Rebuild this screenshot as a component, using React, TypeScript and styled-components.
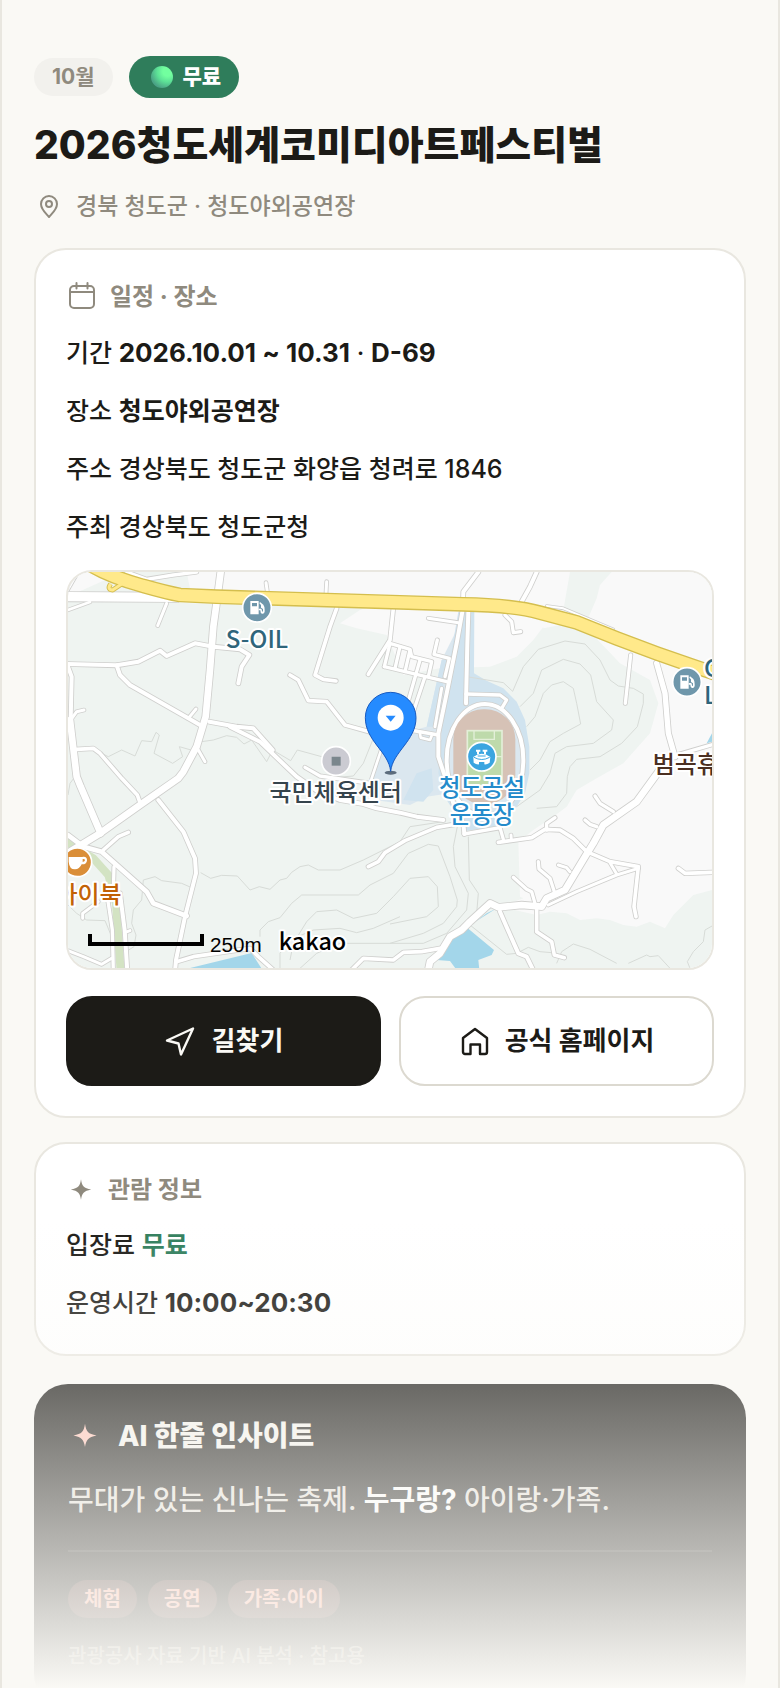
import React from "react";
import styled, { createGlobalStyle } from "styled-components";

const GlobalStyle = createGlobalStyle`
  *, *::before, *::after { box-sizing: border-box; }
  body {
    margin: 0;
    background: #faf9f5;
    color: #1c1b17;
    font-family: Inter, "Noto Sans CJK KR", sans-serif;
  }
  h1, h2, p, ul { margin: 0; padding: 0; }
`;

const Page = styled.main`
  position: relative;
  height: 100vh;
  overflow: hidden;
  padding: 56px 32px 0;
  border: solid #e9e7e0;
  border-width: 0 2px;
`;

const Badges = styled.div`
  display: flex;
  align-items: center;
  gap: 16px;
`;

const MonthBadge = styled.span`
  padding: 0 18px;
  border-radius: 20px;
  background: #f2f1ed;
  color: #8f8a7e;
  font-size: 21px;
  font-weight: 700;
  line-height: 38px;
`;

const FreeBadge = styled.span`
  display: flex;
  align-items: center;
  gap: 10px;
  padding: 0 18px 0 22px;
  border-radius: 21px;
  background: #2f7d5b;
  color: #fff;
  font-size: 21px;
  font-weight: 800;
  line-height: 42px;
`;

const Dot = styled.i`
  width: 22px;
  height: 22px;
  border-radius: 50%;
  background: radial-gradient(circle at 75% 25%, #72ff9f 0 20%, #5ce096 45%, #4ba385 75%, #5199a0 100%);
`;

const Title = styled.h1`
  margin-top: 22px;
  font-size: 39px;
  font-weight: 800;
  line-height: 50px;
`;

const Place = styled.p`
  display: flex;
  align-items: center;
  gap: 14px;
  margin: 20px 0 26px;
  padding-left: 2px;
  color: #8f8a7e;
  font-size: 23px;
  font-weight: 500;
  line-height: 32px;
`;

const Card = styled.section`
  margin-bottom: 24px;
  padding: 30px;
  border: 2px solid #e9e7e0;
  border-radius: 32px;
  background: #fff;
`;

const CardTitle = styled.h2`
  display: flex;
  align-items: center;
  gap: 12px;
  min-height: 32px;
  margin-bottom: 18px;
  color: #8f8a7e;
  font-size: 24px;
  font-weight: 700;
  line-height: 32px;
`;

const Facts = styled.div`
  display: grid;
  gap: 16px;
`;

const Fact = styled.p`
  font-size: 25px;
  font-weight: 500;
  line-height: 42px;
`;

const Figures = styled.strong`
  font-size: 26px;
  font-weight: 700;
`;

const Free = styled.strong`
  color: #2f7d5b;
`;

const MapFrame = styled.div`
  height: 400px;
  margin: 22px 0 26px;
  overflow: hidden;
  border: 2px solid #e9e7e0;
  border-radius: 26px;

  svg { display: block; width: 100%; height: 100%; }
`;

const MapLabel = styled.text<{ $size?: number }>`
  font-family: "Noto Sans CJK KR", sans-serif;
  font-size: ${(p) => p.$size ?? 72}px;
  font-weight: 500;
  stroke: #fff;
  stroke-width: 12px;
  stroke-linejoin: round;
  paint-order: stroke;
`;

const ScaleLabel = styled.text`
  font-family: "Liberation Sans", sans-serif;
  font-size: 62px;
`;

const Actions = styled.div`
  display: grid;
  grid-template-columns: 1fr 1fr;
  gap: 18px;
`;

const Action = styled.a<{ $solid?: boolean }>`
  display: flex;
  align-items: center;
  justify-content: center;
  gap: 14px;
  height: 90px;
  border: 2px solid ${(p) => (p.$solid ? "#1c1b17" : "#dcd9d0")};
  border-radius: 26px;
  background: ${(p) => (p.$solid ? "#1c1b17" : "#fff")};
  color: ${(p) => (p.$solid ? "#faf9f5" : "#1c1b17")};
  font-size: 26px;
  font-weight: 700;
  line-height: 32px;
  text-decoration: none;
`;

const Insight = styled.section`
  margin-top: 28px;
  padding: 34px;
  border-radius: 34px;
  background: #1c1b17;
`;

const InsightTitle = styled.h2`
  display: flex;
  align-items: center;
  gap: 16px;
  color: #f4f2ec;
  font-size: 28px;
  font-weight: 800;
  line-height: 36px;
`;

const InsightText = styled.p`
  margin-top: 24px;
  padding-bottom: 28px;
  border-bottom: 2px solid #34332f;
  color: #e2dfd7;
  font-size: 28px;
  font-weight: 500;
  line-height: 44px;

  strong { color: #fff; }
`;

const Tags = styled.ul`
  display: flex;
  gap: 11px;
  margin: 28px 0 20px;
  list-style: none;
`;

const Tag = styled.li`
  padding: 0 16px;
  border-radius: 19px;
  background: #4c3430;
  color: #ffab98;
  font-size: 20px;
  font-weight: 700;
  line-height: 38px;
`;

const Source = styled.p`
  color: #8f8a7e;
  font-size: 20px;
  font-weight: 500;
  line-height: 36px;
`;

const Fade = styled.div`
  position: absolute;
  inset: auto -2px 0;
  height: 468px;
  background: linear-gradient(rgba(250, 249, 245, 0), #faf9f5);
  pointer-events: none;
`;

const PinIcon = () => (
  <svg width="26" height="26" viewBox="0 0 26 26" fill="none" stroke="currentColor" strokeWidth="2">
    <path d="M13 24C10 20.500 5 16.500 5 11a8 8 0 0 1 16 0c0 5.500-5 9.500-8 13Z" strokeLinejoin="round" />
    <circle cx="13" cy="11" r="3" />
  </svg>
);

const CalendarIcon = () => (
  <svg width="32" height="34" viewBox="0 0 32 34" fill="none" stroke="currentColor" strokeWidth="2" strokeLinecap="round">
    <rect x="4" y="6" width="24" height="22" rx="4" />
    <path d="M4 12H28M10.500 3V8.500M21.500 3V8.500" />
  </svg>
);

const Sparkle = ({ size, color }: { size: number; color: string }) => (
  <svg width={size} height={size} viewBox="0 0 28 28" fill={color}>
    <path d="M14 4C15 10.500 16.500 12.500 23.500 13.500C16.500 15 15 17 14 23C13 17 11.500 15 4.500 13.500C11.500 12.500 13 10.500 14 4Z" />
  </svg>
);

const NavIcon = () => (
  <svg width="34" height="34" viewBox="0 0 34 34" fill="none" stroke="currentColor" strokeWidth="2.4" strokeLinejoin="round">
    <path d="M3 16.500 29 4.500 17 30.500 14.500 19.500Z" />
  </svg>
);

const HomeIcon = () => (
  <svg width="32" height="34" viewBox="0 0 32 34" fill="none" stroke="currentColor" strokeWidth="2.4" strokeLinejoin="round">
    <path d="M4 14 16 5 28 14V28a2 2 0 0 1-2 2H21V20.500H11.500V30H6a2 2 0 0 1-2-2Z" />
  </svg>
);

const roads: [number, string][] = [
  [28, "54,110 380,112"],
  [10, "440,36 370,45 290,58 230,36"],
  [6, "54,90 85,36"],
  [8, "54,150 120,126"],
  [9, "323,197 350,130"],
  [9, "648,68 652,95"],
  [9, "830,65 828,100"],
  [20, "512,36 505,90 490,200 480,330 467,470 440,560 400,635 385,655 270,735 150,820 60,875"],
  [12, "54,312 200,316 265,305 330,272 350,288 435,250 490,260 570,268 598,285 575,320 565,370"],
  [12, "200,316 210,345 240,375 415,475 450,495"],
  [9, "415,475 438,447"],
  [12, "54,320 65,350 62,480"],
  [20, "60,480 80,650 92,680 152,820"],
  [9, "62,480 80,455 102,450"],
  [11, "80,568 130,565 150,580 215,655 262,705 270,728"],
  [12, "478,485 560,500 610,505 668,570"],
  [12, "540,500 630,545 740,650 800,692 870,720 940,732 980,745 1050,758 1100,770 1180,780"],
  [10, "765,622 810,648 960,670"],
  [9, "445,570 465,605"],
  [11, "720,345 745,360 775,422 830,425 885,495 975,520"],
  [11, "860,145 840,200 795,345 820,358 858,363"],
  [11, "1030,145 1020,240 955,343"],
  [10, "1003,320 1020,250 1080,268 1085,290 1145,305 1135,350"],
  [10, "1003,320 1190,365"],
  [10, "1035,325 1050,260"],
  [10, "1065,335 1080,270"],
  [10, "1070,440 1110,300"],
  [10, "1085,470 1125,350"],
  [10, "1162,240 1152,283 1198,295 1185,350"],
  [9, "1135,175 1225,188"],
  [9, "1175,385 1155,500"],
  [10, "1080,510 1165,525"],
  [8, "1110,520 1112,533 1140,540 1145,527"],
  [8, "995,565 970,640 950,700"],
  [12, "1285,36 1240,95 1238,150 1220,250 1190,400 1165,520 1165,590 1185,650 1210,730 1240,790 1243,822"],
  [12, "1255,155 1252,250 1248,430"],
  [10, "1248,402 1350,405 1370,420 1355,445"],
  [12, "1460,36 1440,80 1415,125"],
  [10, "1365,165 1385,185 1390,218 1412,215"],
  [6, "1490,138 1540,145 1690,208"],
  [10, "1742,285 1726,430"],
  [16, "1820,310 1845,400 1855,520 1875,590"],
  [20, "1840,615 1760,725 1660,795 1630,850 1605,890 1545,990 1490,1015 1475,1040 1415,1035 1345,1042 1320,1030 1260,1085 1235,1110 1200,1130 1170,1180 1140,1205 1135,1230"],
  [10, "1830,620 1880,585 1990,553"],
  [10, "1635,708 1650,730 1690,755"],
  [10, "1605,780 1620,793 1640,800"],
  [10, "1515,773 1490,790 1490,810"],
  [11, "1345,847 1445,833 1485,808 1530,810 1570,835 1610,875 1680,905 1765,920 1752,1040 1758,1070"],
  [9, "1495,1035 1580,995 1700,945 1765,925"],
  [9, "1680,908 1700,942"],
  [10, "1242,822 1350,803 1360,838"],
  [9, "1383,825 1384,840"],
  [11, "955,920 985,905 1005,878 1065,842 1160,802 1220,792"],
  [10, "1390,952 1430,988 1445,995 1455,1030"],
  [10, "1465,905 1467,927 1500,955 1513,995"],
  [9, "1525,915 1550,923 1560,935"],
  [11, "1460,1050 1460,1115 1505,1145 1513,1185 1543,1193"],
  [12, "1350,1055 1365,1090 1405,1180 1430,1190 1452,1235"],
  [11, "1885,925 1905,940 1990,937"],
  [11, "900,1235 940,1195 1030,1200 1060,1177 1115,1175 1170,1165"],
  [12, "325,720 400,815 435,895 438,940 405,1070 378,1200 375,1235"],
  [14, "54,825 100,860 155,875 290,995 310,1030 410,1068"],
  [11, "160,870 205,830 235,817"],
  [10, "192,920 190,1000"],
  [10, "172,1010 187,1110 190,1235"],
  [12, "210,1000 224,1110 232,1235"],
  [9, "98,1075 98,1060 145,1025"],
  [9, "226,1117 240,1112"],
  [9, "54,1172 100,1190 155,1213 185,1195"],
  [11, "380,1205 430,1190 600,1165 625,1190 670,1230"],
];

const contours = [
  "150,578 175,590 215,570 255,588 275,542 305,545 318,517 328,525 312,580 368,610 398,590 388,560 430,572",
  "455,545 490,540 530,527 560,532 582,552 605,540 650,605 668,570 722,602 742,570 815,590 880,600",
  "970,535 940,610 910,648 860,652",
  "1250,350 1360,368 1388,394 1420,320 1465,268 1545,243 1605,252 1650,300 1680,360 1705,378 1750,385 1780,402 1780,430 1762,500 1715,550 1650,590 1580,598 1560,620 1552,650 1550,700 1520,740 1460,745",
  "1410,440 1450,400 1475,330 1540,298 1590,312 1622,345 1640,425 1690,480 1685,510 1630,550 1550,560 1515,580 1500,640 1470,690 1400,740",
  "1430,500 1455,470 1480,400 1505,375 1540,365 1570,385 1580,430 1592,492 1540,520 1500,545 1470,600 1440,630",
  "452,938 482,955 515,946 562,948 600,990 628,980 660,988 690,960 710,955 725,937 750,920 775,915 805,930 870,930 940,900 1050,845 1080,800 1180,785",
  "280,960 315,950 335,962 395,970 418,980 438,970",
  "280,960 275,1020 250,1050 245,1090 258,1125 252,1160 228,1175",
  "630,1130 630,1110 655,1085 690,1073 725,1030 755,1005 925,1005 960,975 1030,940 1075,880 1135,853 1165,858 1200,950 1222,1020 1220,1040 1180,1090 1120,1120 1020,1150",
  "720,1200 730,1150 770,1085 800,1055 860,1050 910,1075 980,1060 1030,1010 1080,955 1135,950 1162,980 1165,1040 1130,1070 1020,1092",
  "690,1225 690,1180 720,1140 790,1110 870,1105 920,1118 970,1105 1050,1070",
  "750,1225 800,1180 870,1150 1020,1150 1120,1150 1190,1120 1250,1050 1255,1000 1215,920 1210,860 1222,800",
  "1255,830 1258,960 1285,1000 1280,1060 1260,1095 1370,1183 1400,1180 1435,1162 1470,1175 1505,1178",
  "1520,1210 1535,1175 1570,1152 1620,1168 1700,1210",
  "1735,1210 1790,1185 1800,1190 1825,1187 1860,1225",
  "1920,1225 1912,1205 1930,1175 1960,1145 1965,1110 1986,1098",
  "54,1035 80,1060 110,1080 165,1082 185,1130",
  "54,705 60,670 75,650",
];

const highway = "M110 8C160 40 210 58 270 75S350 98 390 105L500 110 1050 127 1240 133Q1390 136 1470 158L1580 187 1700 235 1820 280 1920 315 2000 342";

const PumpMarker = ({ x, y }: { x: number; y: number }) => (
  <g transform={`translate(${x} ${y})`}>
    <circle r="43" fill="#6f97ab" stroke="#fff" strokeWidth="5" />
    <path d="M-20-20H5V20H-20ZM-15-14V-4H0V-14Z" fill="#fff" fillRule="evenodd" />
    <path d="M9-17 19-9Q23-4 23 6V12Q22 19 15 18 10 17 10 8H5V3H12Q15 4 15 10 16 14 18 11V4L12 0V-8L7-13Z" fill="#fff" />
  </g>
);

const AreaMap = () => (
  <svg viewBox="54 36 1932 1188" preserveAspectRatio="xMidYMid slice" role="img" aria-label="청도야외공연장 지도">
    <path fill="#eff4f1" d="M54 36H1986V1224H54Z" />
    <g fill="#f9f9f9">
      <path d="M54 36H1560L1540 160 1480 200 1450 240 1400 290 1320 320 1170 325 1060 345 1010 225 920 205 870 190 930 150 990 130H425L54 110Z" />
      <path d="M1450 36 1480 205 1560 190 1620 215 1710 310 1800 360 1825 430 1800 520 1720 610 1640 655 1580 690 1550 740 1510 770 1450 810 1405 845 1410 1010 1420 1015 1350 1040 1460 1065 1500 1055 1550 1060 1590 1080 1640 1075 1680 1080 1720 1095 1760 1100 1800 1085 1845 1105 1870 1065 1930 1005 1986 990V36Z" />
    </g>
    <path fill="#eff4f1" d="M1560 36H1685L1650 75 1640 115 1612 180 1540 150ZM80 98 165 60 225 36H410L425 110H80Z" />
    <path fill="#dbe7ef" d="M1215 220 1175 300 1130 500 1060 520 990 560 970 650 990 722 1080 735 1130 710 1200 700 1240 400Z" />
    <path fill="#d0e3ef" d="M1225 155H1273L1272 340 1310 362 1360 385 1400 425 1425 480 1438 560V640L1425 700 1400 740 1340 800 1250 812 1190 720 1165 640 1175 520 1200 300ZM1175 300H1190L1160 500H1130ZM1100 640 1145 625 1150 690 1120 725 1060 720Z" />
    <ellipse cx="1305" cy="600" rx="118" ry="172" fill="#dbe7ef" />
    <g fill="none" stroke="#d7dbd7" strokeWidth="3">
      {contours.map((points) => <polyline key={points} points={points} />)}
    </g>
    <g fill="#a3d6ea">
      <path d="M412 1226 605 1179 615 1195 635 1226ZM1255 1106 1332 1170 1325 1185 1285 1200 1288 1230H1220L1200 1203 1160 1200 1210 1130ZM1275 1086 1340 1045 1310 1060ZM1970 550 1986 520V545Z" />
    </g>
    <polyline points="40,840 130,895 175,945 198,1030 212,1235" fill="none" stroke="#d3e3c3" strokeWidth="24" />
    <g fill="none" strokeLinecap="round" strokeLinejoin="round">
      <g stroke="#cfcfcd">
        {roads.map(([w, points]) => <polyline key={points} points={points} strokeWidth={w + 5} />)}
        <ellipse cx="1305" cy="600" rx="115" ry="168" strokeWidth="17" />
      </g>
      <g stroke="#fff">
        {roads.map(([w, points]) => <polyline key={points} points={points} strokeWidth={w} />)}
        <ellipse cx="1305" cy="600" rx="115" ry="168" strokeWidth="12" />
      </g>
    </g>
    <rect x="1210" y="448" width="186" height="285" rx="90" fill="#d6c2b6" />
    <rect x="1252" y="512" width="104" height="165" fill="#bedaab" stroke="#e3efd8" strokeWidth="5" />
    <path d="M1272 512V538H1333V512M1252 590H1356" fill="none" stroke="#e3efd8" strokeWidth="4" />
    <g fill="none" strokeLinejoin="round">
      <path d="M182 72Q170 88 188 90L215 72" stroke="#d4be4e" strokeWidth="15" />
      <path d={highway} stroke="#d4be4e" strokeWidth="44" />
      <path d="M182 72Q170 88 188 90L215 72" stroke="#ffe98a" strokeWidth="9" />
      <path d={highway} stroke="#ffe98a" strokeWidth="36" />
    </g>
    <PumpMarker x={621} y={143} />
    <MapLabel x="621" y="263" textAnchor="middle" fill="#2f657b">S-OIL</MapLabel>
    <PumpMarker x={1911} y={366} />
    <MapLabel x="1962" y="350" fill="#2f657b">C</MapLabel>
    <MapLabel x="1962" y="431" fill="#2f657b">L</MapLabel>
    <circle cx="858" cy="603" r="43" fill="#cbcbd2" stroke="#fff" strokeWidth="5" />
    <path d="M845 590H872V617H845Z" fill="#7b878d" />
    <MapLabel x="857" y="722" textAnchor="middle" fill="#36444d">국민체육센터</MapLabel>
    <circle cx="1295" cy="590" r="43" fill="#3ba5e0" stroke="#fff" strokeWidth="5" />
    <g fill="#fff">
      <path d="M1270 591Q1295 571 1321 591L1319 608Q1311 614 1303 613V606H1287V613Q1279 614 1271 608Z" />
      <path d="M1278 569H1291V575H1287V583H1281V575H1278ZM1298 569H1312V575H1308V583H1302V575H1298Z" />
    </g>
    <path d="M1272 592Q1295 605 1319 592M1283 588H1307" fill="none" stroke="#3ba5e0" strokeWidth="3" />
    <MapLabel $size={70} x="1296" y="709" textAnchor="middle" fill="#248bcb">청도공설</MapLabel>
    <MapLabel $size={70} x="1296" y="788" textAnchor="middle" fill="#248bcb">운동장</MapLabel>
    <MapLabel x="1808" y="640" fill="#4b3022">범곡휴</MapLabel>
    <circle cx="82" cy="907" r="43" fill="#da8e38" stroke="#fff" strokeWidth="5" />
    <path d="M56 891H96Q112 888 111 902Q109 914 95 913Q88 928 75 928Q58 928 56 905ZM98 897V906Q105 905 105 900Q104 896 98 897Z" fill="#fff" fillRule="evenodd" />
    <MapLabel x="215" y="1030" textAnchor="end" fill="#c26205">아이북</MapLabel>
    <ellipse cx="1022" cy="638" rx="18" ry="6" fill="#5c6c7c" />
    <path d="M1022 634C1016 575 946 543 946 473a76 76 0 0 1 152 0C1098 543 1028 575 1022 634Z" fill="#258bff" stroke="#175ac0" strokeWidth="3" />
    <circle cx="1022" cy="473" r="39" fill="#fff" />
    <path d="M1007 467H1037L1022 485Z" fill="#258bff" />
    <path d="M120 1122V1152H456V1122" fill="none" stroke="#000" strokeWidth="12" />
    <ScaleLabel x="480" y="1176">250m</ScaleLabel>
    <MapLabel $size={70} x="686" y="1170">kakao</MapLabel>
  </svg>
);

export default function App() {
  return (
    <>
      <GlobalStyle />
      <Page>
        <Badges>
          <MonthBadge>10월</MonthBadge>
          <FreeBadge><Dot />무료</FreeBadge>
        </Badges>
        <Title>2026청도세계코미디아트페스티벌</Title>
        <Place><PinIcon />경북 청도군 · 청도야외공연장</Place>

        <Card>
          <CardTitle><CalendarIcon />일정 · 장소</CardTitle>
          <Facts>
            <Fact>기간 <Figures>2026.10.01 ~ 10.31</Figures> · <Figures>D-69</Figures></Fact>
            <Fact>장소 <strong>청도야외공연장</strong></Fact>
            <Fact>주소 경상북도 청도군 화양읍 청려로 1846</Fact>
            <Fact>주최 경상북도 청도군청</Fact>
          </Facts>
          <MapFrame><AreaMap /></MapFrame>
          <Actions>
            <Action $solid href="#directions"><NavIcon />길찾기</Action>
            <Action href="#homepage"><HomeIcon />공식 홈페이지</Action>
          </Actions>
        </Card>

        <Card>
          <CardTitle><Sparkle size={30} color="#8f8a7e" />관람 정보</CardTitle>
          <Facts>
            <Fact>입장료 <Free>무료</Free></Fact>
            <Fact>운영시간 <Figures>10:00~20:30</Figures></Fact>
          </Facts>
        </Card>

        <Insight>
          <InsightTitle><Sparkle size={34} color="#ffc3b5" />AI 한줄 인사이트</InsightTitle>
          <InsightText>무대가 있는 신나는 축제. <strong>누구랑?</strong> 아이랑·가족.</InsightText>
          <Tags>
            <Tag>체험</Tag>
            <Tag>공연</Tag>
            <Tag>가족·아이</Tag>
          </Tags>
          <Source>관광공사 자료 기반 AI 분석 · 참고용</Source>
        </Insight>
        <Fade />
      </Page>
    </>
  );
}
